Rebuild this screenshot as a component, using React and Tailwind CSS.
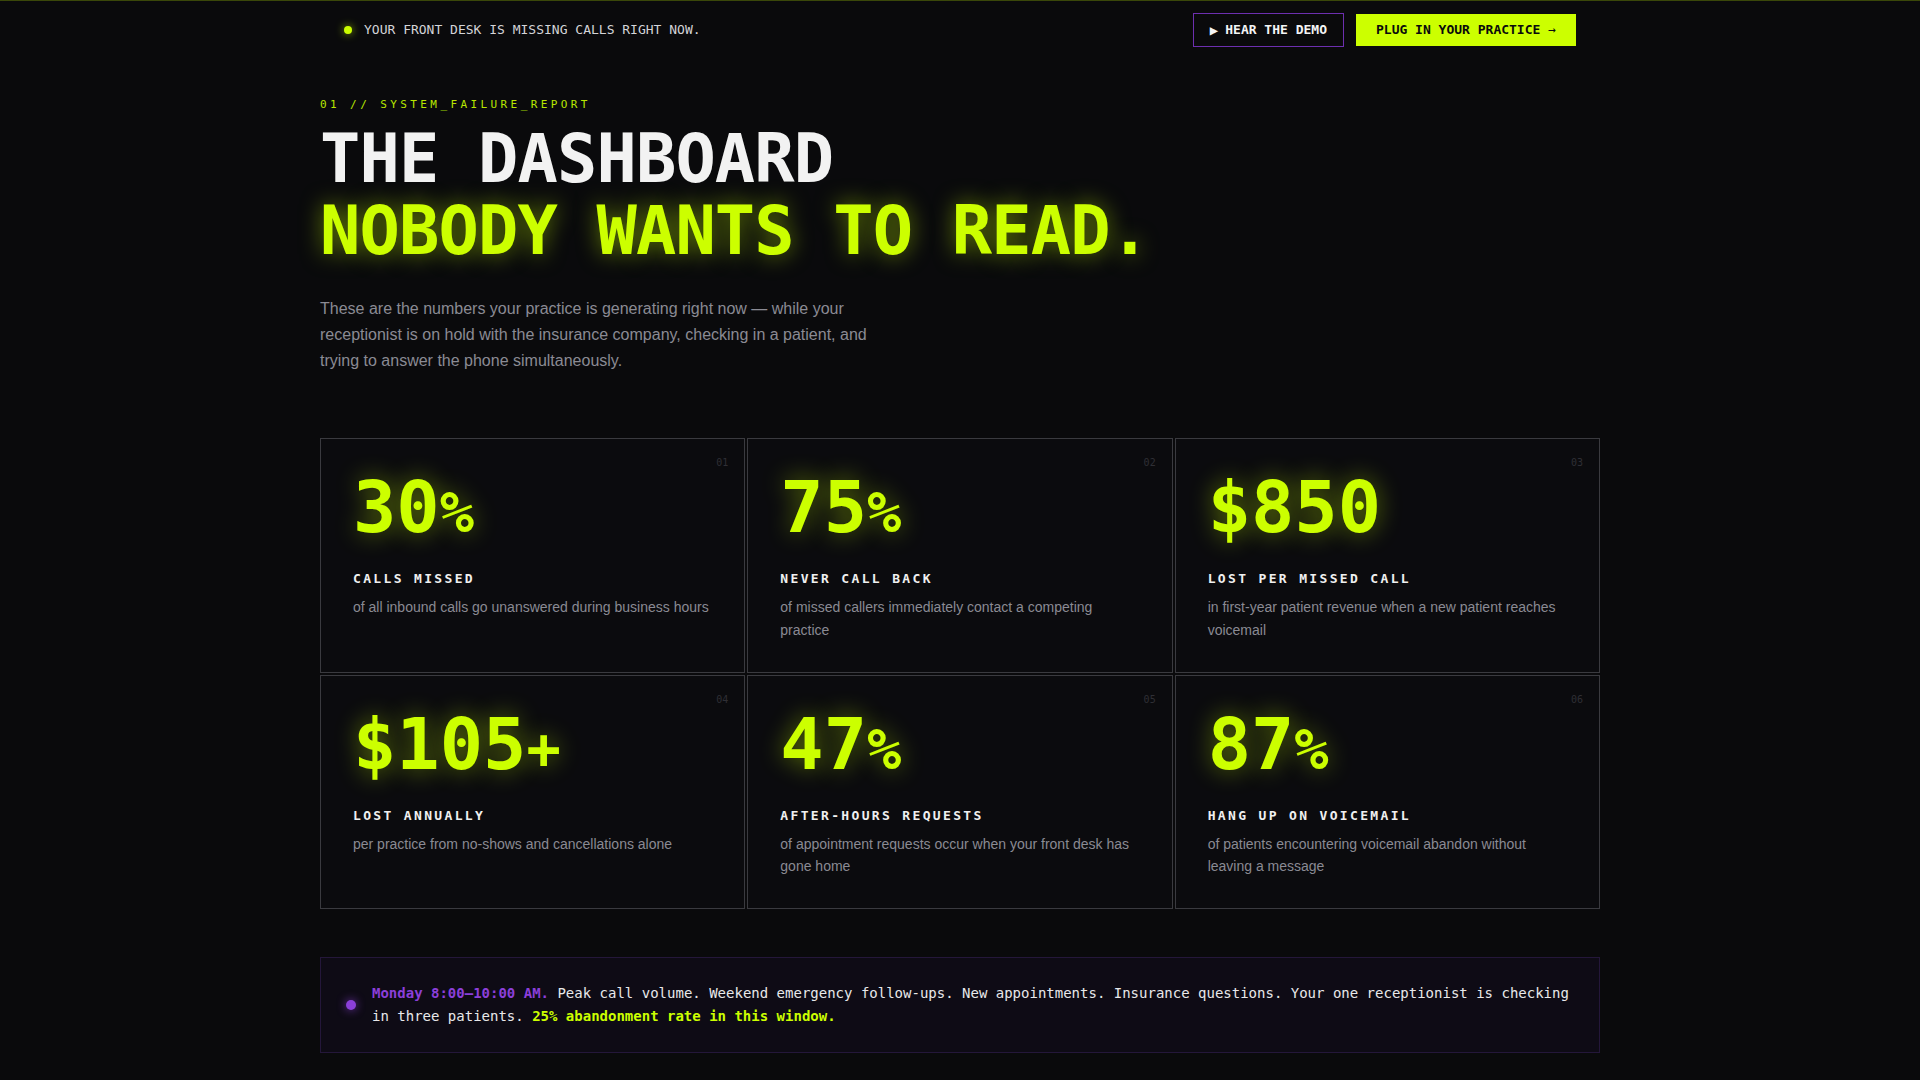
const stats = [
  { n: "30", s: "%", label: "CALLS MISSED", desc: "of all inbound calls go unanswered during business hours", idx: "01" },
  { n: "75", s: "%", label: "NEVER CALL BACK", desc: "of missed callers immediately contact a competing practice", idx: "02" },
  { n: "$850", s: "", label: "LOST PER MISSED CALL", desc: "in first-year patient revenue when a new patient reaches voicemail", idx: "03" },
  { n: "$105", s: "+", label: "LOST ANNUALLY", desc: "per practice from no-shows and cancellations alone", idx: "04" },
  { n: "47", s: "%", label: "AFTER-HOURS REQUESTS", desc: "of appointment requests occur when your front desk has gone home", idx: "05" },
  { n: "87", s: "%", label: "HANG UP ON VOICEMAIL", desc: "of patients encountering voicemail abandon without leaving a message", idx: "06" },
];

function StatCard({ n, s, label, desc, idx }) {
  return (
    <div className="relative border border-[#3a3a3f] bg-[#0b0b0e] px-8 pb-[30px] pt-8">
      <span className="absolute right-4 top-4 font-['DejaVu_Sans_Mono',monospace] text-[10px] leading-[15px] text-[#2f2f35]">
        {idx}
      </span>
      <div className="font-['DejaVu_Sans_Mono',monospace] text-[72px] font-bold leading-none text-[#ccff00] [text-shadow:0_0_24px_rgba(204,255,0,0.45)]">
        {n}
        {s && <span className="text-[57px]">{s}</span>}
      </div>
      <div className="mt-[26px] font-['DejaVu_Sans_Mono',monospace] text-[13px] font-bold leading-5 tracking-[0.18em] text-[#f0f0f0]">
        {label}
      </div>
      <p className="mt-[7px] font-['Liberation_Sans',Arial,sans-serif] text-sm leading-[22.75px] text-[#8a8a93]">
        {desc}
      </p>
    </div>
  );
}

export default function App() {
  return (
    <div className="min-h-screen border-t border-[#ccff00]/25 bg-[#0a0a0c] pb-10">
      <div className="mx-auto max-w-[1280px]">
        <nav className="flex items-center justify-between px-6 py-3">
          <div className="flex items-center gap-3">
            <span className="h-2 w-2 rounded-full bg-[#ccff00] shadow-[0_0_8px_rgba(204,255,0,0.7)]" />
            <span className="font-['DejaVu_Sans_Mono',monospace] text-[13px] leading-4 text-[#d4d4d8]">
              YOUR FRONT DESK IS MISSING CALLS RIGHT NOW.
            </span>
          </div>
          <div className="flex items-center gap-3">
            <button className="flex items-center gap-[7px] border border-[#6d2fb0] bg-transparent px-4 py-2 font-['DejaVu_Sans_Mono',monospace] text-[13px] font-bold leading-4 text-[#f4f4f5]">
              <span className="text-[14px] leading-4">▶</span>
              <span>HEAR THE DEMO</span>
            </button>
            <button className="bg-[#ccff00] px-5 py-2 font-['DejaVu_Sans_Mono',monospace] text-[13px] font-bold leading-4 text-[#0a0a0c]">
              PLUG IN YOUR PRACTICE <span className="font-normal">→</span>
            </button>
          </div>
        </nav>

        <section className="pt-[38px]">
          <div className="mb-[10px] font-['DejaVu_Sans_Mono',monospace] text-[11px] leading-4 tracking-[0.31em] text-[#b8e600]">
            01 // SYSTEM_FAILURE_REPORT
          </div>
          <h1 className="font-['DejaVu_Sans_Mono',monospace] text-[67px] font-bold leading-[72px] tracking-[-0.85px]">
            <span className="block text-[#f2f2f2]">THE DASHBOARD</span>
            <span className="block text-[#ccff00] [text-shadow:0_0_22px_rgba(204,255,0,0.5)]">NOBODY WANTS TO READ.</span>
          </h1>
          <p className="mt-[29px] max-w-[576px] font-['Liberation_Sans',Arial,sans-serif] text-base leading-[26px] text-[#8b8b94]">
            These are the numbers your practice is generating right now — while your receptionist is on hold with the insurance company, checking in a patient, and trying to answer the phone simultaneously.
          </p>

          <div className="mt-16 grid grid-cols-3 gap-[2px]">
            {stats.map((st) => (
              <StatCard key={st.idx} {...st} />
            ))}
          </div>

          <div className="mt-12 flex items-center gap-4 border border-[#24173a] bg-[#0e0b15] py-6 pl-[25px] pr-6">
            <span className="h-2.5 w-2.5 shrink-0 rounded-full bg-[#8b3fd9] shadow-[0_0_10px_rgba(139,63,217,0.8)]" />
            <p className="font-['DejaVu_Sans_Mono',monospace] text-sm leading-[22.75px] text-[#e8e8ea]">
              <span className="font-bold text-[#8b3fd9]">Monday 8:00–10:00 AM.</span> Peak call volume. Weekend emergency follow-ups. New appointments. Insurance questions. Your one receptionist is checking in three patients.{" "}
              <span className="font-bold text-[#ccff00]">25% abandonment rate in this window.</span>
            </p>
          </div>
        </section>
      </div>
    </div>
  );
}
